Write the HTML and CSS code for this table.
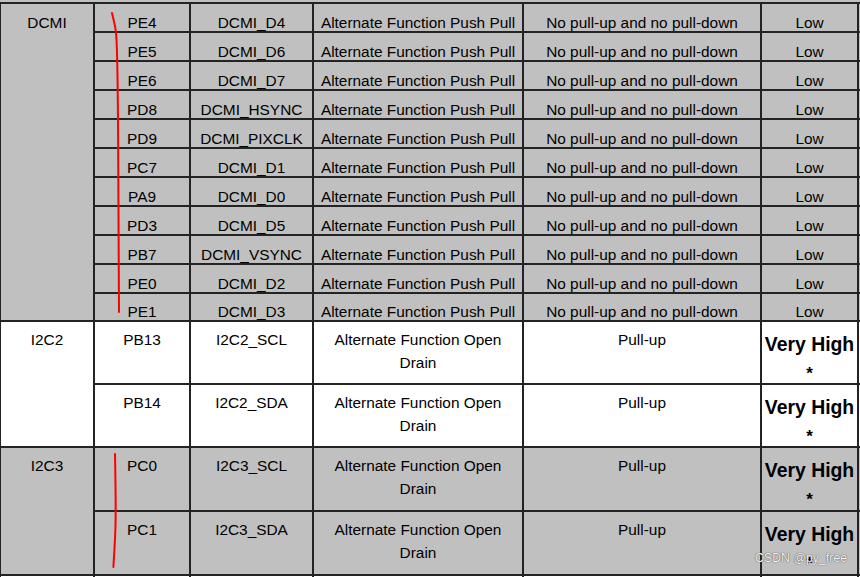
FILE: index.html
```html
<!DOCTYPE html>
<html>
<head>
<meta charset="utf-8">
<link rel="stylesheet" href="styles.css">
</head>
<body>
<div class="page">
<table class="pins">
  <colgroup>
    <col class="c1"><col class="c2"><col class="c3"><col class="c4"><col class="c5"><col class="c6"><col class="c7">
  </colgroup>
  <tbody class="grp gray dcmi">
    <tr><td rowspan="11" class="periph">DCMI</td><td>PE4</td><td>DCMI_D4</td><td>Alternate Function Push Pull</td><td>No pull-up and no pull-down</td><td>Low</td><td></td></tr>
    <tr><td>PE5</td><td>DCMI_D6</td><td>Alternate Function Push Pull</td><td>No pull-up and no pull-down</td><td>Low</td><td></td></tr>
    <tr><td>PE6</td><td>DCMI_D7</td><td>Alternate Function Push Pull</td><td>No pull-up and no pull-down</td><td>Low</td><td></td></tr>
    <tr><td>PD8</td><td>DCMI_HSYNC</td><td>Alternate Function Push Pull</td><td>No pull-up and no pull-down</td><td>Low</td><td></td></tr>
    <tr><td>PD9</td><td>DCMI_PIXCLK</td><td>Alternate Function Push Pull</td><td>No pull-up and no pull-down</td><td>Low</td><td></td></tr>
    <tr><td>PC7</td><td>DCMI_D1</td><td>Alternate Function Push Pull</td><td>No pull-up and no pull-down</td><td>Low</td><td></td></tr>
    <tr><td>PA9</td><td>DCMI_D0</td><td>Alternate Function Push Pull</td><td>No pull-up and no pull-down</td><td>Low</td><td></td></tr>
    <tr><td>PD3</td><td>DCMI_D5</td><td>Alternate Function Push Pull</td><td>No pull-up and no pull-down</td><td>Low</td><td></td></tr>
    <tr><td>PB7</td><td>DCMI_VSYNC</td><td>Alternate Function Push Pull</td><td>No pull-up and no pull-down</td><td>Low</td><td></td></tr>
    <tr><td>PE0</td><td>DCMI_D2</td><td>Alternate Function Push Pull</td><td>No pull-up and no pull-down</td><td>Low</td><td></td></tr>
    <tr class="last"><td>PE1</td><td>DCMI_D3</td><td>Alternate Function Push Pull</td><td>No pull-up and no pull-down</td><td>Low</td><td></td></tr>
  </tbody>
  <tbody class="grp white i2c">
    <tr class="r-a"><td rowspan="2" class="periph">I2C2</td><td>PB13</td><td>I2C2_SCL</td><td class="mode">Alternate Function Open Drain</td><td>Pull-up</td><td class="speed"><span class="vh">Very High</span><span class="star">*</span></td><td></td></tr>
    <tr class="r-a"><td>PB14</td><td>I2C2_SDA</td><td class="mode">Alternate Function Open Drain</td><td>Pull-up</td><td class="speed"><span class="vh">Very High</span><span class="star">*</span></td><td></td></tr>
  </tbody>
  <tbody class="grp gray i2c">
    <tr class="r-b"><td rowspan="2" class="periph">I2C3</td><td>PC0</td><td>I2C3_SCL</td><td class="mode">Alternate Function Open Drain</td><td>Pull-up</td><td class="speed"><span class="vh">Very High</span><span class="star">*</span></td><td></td></tr>
    <tr class="r-b"><td>PC1</td><td>I2C3_SDA</td><td class="mode">Alternate Function Open Drain</td><td>Pull-up</td><td class="speed"><span class="vh">Very High</span><span class="star">*</span></td><td></td></tr>
  </tbody>
  <tbody class="grp white tail">
    <tr><td></td><td></td><td></td><td></td><td></td><td></td><td></td></tr>
  </tbody>
</table>

<svg class="marks" width="860" height="577" viewBox="0 0 860 577">
  <path d="M112 13 C114 22 116 28 116 34 C117 40 117.5 60 118 120 L119 312" fill="none" stroke="#ff0000" stroke-width="2" stroke-linecap="round"/>
  <path d="M115 454 C115.5 480 116 505 115.5 525 C115 545 113.8 558 113.4 567" fill="none" stroke="#ff0000" stroke-width="2" stroke-linecap="round"/>
</svg>

<span class="watermark">CSDN @py_free</span>
</div>
</body>
</html>
```

FILE: styles.css
```css
html, body {
  margin: 0;
  padding: 0;
}

body {
  background: #c0c0c0;
  width: 860px;
  height: 577px;
  overflow: hidden;
}

.page {
  position: relative;
  width: 860px;
  height: 577px;
  overflow: hidden;
  padding-top: 2px;
  box-sizing: border-box;
}

.pins {
  border-collapse: collapse;
  table-layout: fixed;
  width: 958px;
  margin-left: -1px;
  font-family: "Liberation Sans", Arial, sans-serif;
  font-size: 15.4px;
  color: #000;
}

.c1 { width: 94px; }
.c2 { width: 96px; }
.c3 { width: 123px; }
.c4 { width: 210px; }
.c5 { width: 238px; }
.c6 { width: 97px; }
.c7 { width: 100px; }

.pins td {
  border: 2px solid #232323;
  padding: 0;
  text-align: center;
  white-space: nowrap;
}

.gray td { background: #c0c0c0; }
.white td { background: #ffffff; }

.dcmi tr { height: 29px; }
.dcmi tr.last { height: 28px; }
.dcmi td {
  vertical-align: bottom;
  line-height: 16px;
}
.dcmi td.periph {
  vertical-align: top;
  padding-top: 11px;
}

.i2c td {
  vertical-align: top;
  line-height: 23px;
  padding-top: 5.5px;
}
.i2c td.mode {
  white-space: normal;
  padding-left: 10px;
  padding-right: 10px;
}
.r-a { height: 63px; }
.r-b { height: 64px; }

.i2c td.speed {
  padding-top: 9px;
  font-weight: bold;
}
.vh {
  display: block;
  font-size: 19.4px;
  line-height: 26px;
  white-space: nowrap;
}
.star {
  display: block;
  font-size: 17px;
  line-height: 10px;
  margin-top: 11.5px;
}

.tail tr { height: 20px; }

.marks {
  position: absolute;
  left: 0;
  top: 0;
  pointer-events: none;
}

.watermark {
  position: absolute;
  left: 755px;
  top: 551px;
  font-family: "Liberation Sans", Arial, sans-serif;
  font-size: 12.2px;
  color: #f2f2f2;
  text-shadow: 0 0 1px #555, 0 0 1px #555;
  letter-spacing: 0.1px;
}
```
